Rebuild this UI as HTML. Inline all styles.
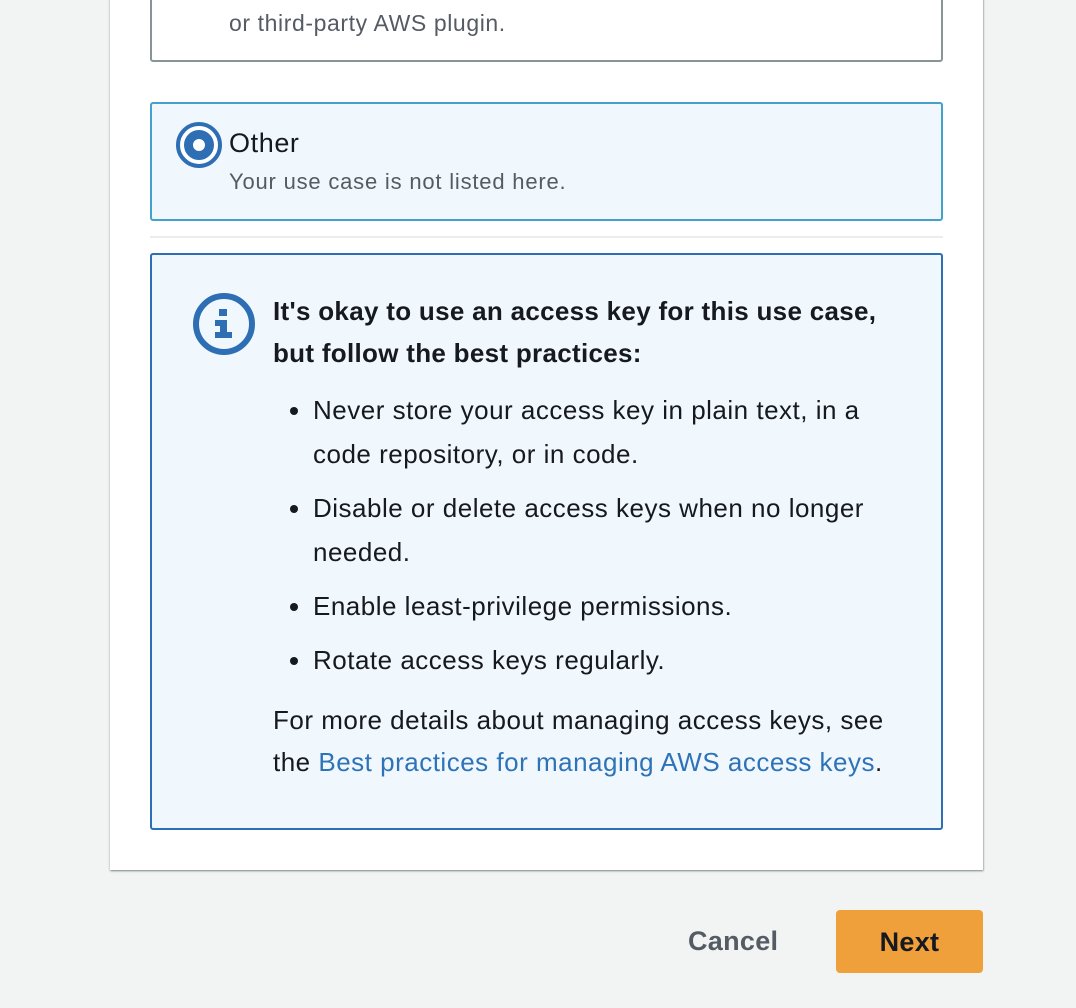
<!DOCTYPE html>
<html><head><meta charset="utf-8"><style>
*{box-sizing:border-box;margin:0;padding:0}
body{width:1076px;height:1008px;background:#f2f3f3;font-family:"Liberation Sans",sans-serif;position:relative;overflow:hidden;color:#16191f}
.panel{position:absolute;left:110px;top:-10px;width:873px;height:880px;background:#fff;box-shadow:0 1px 2px rgba(0,28,36,.4),1px 1px 1px rgba(0,28,36,.15)}
.box1{position:absolute;left:150px;top:-20px;width:793px;height:82px;border:2px solid #879596;border-radius:3px;background:#fff}
.box1 .t{position:absolute;left:77px;top:28px;font-size:23px;letter-spacing:.6px;color:#545b64}
.box2{position:absolute;left:150px;top:102px;width:793px;height:119px;border:2px solid #44a1cc;border-radius:3px;background:#f1f8fd}
.radio{position:absolute;left:24px;top:18px;width:46px;height:46px;border-radius:50%;border:4px solid #2e6eb4;background:#fff}
.radio:after{content:"";position:absolute;left:4px;top:4px;width:30px;height:30px;border-radius:50%;border:9px solid #2e6eb4;box-sizing:border-box}
.other{position:absolute;left:77px;top:24px;font-size:27px;letter-spacing:.6px}
.sub{position:absolute;left:77px;top:65px;font-size:22px;letter-spacing:.8px;color:#545b64}
.div{position:absolute;left:150px;top:236px;width:793px;height:2px;background:#eaeded}
.info{position:absolute;left:150px;top:253px;width:793px;height:577px;border:2px solid #2e6eb4;border-radius:3px;background:#f1f8fd}
.icon{position:absolute;left:39px;top:37px}
.txt{position:absolute;left:121px;top:35px;width:660px;font-size:26px;letter-spacing:.5px;line-height:42px}
.txt b{display:block;letter-spacing:.3px}
ul{margin-top:14px;padding-left:40px}
li{line-height:44px;margin-bottom:10px}
.txt p{margin-top:17px}
a{color:#2e73b8;text-decoration:none}
.cancel{position:absolute;left:688px;top:926px;font-size:27px;font-weight:bold;letter-spacing:.3px;color:#545b64}
.next{position:absolute;left:836px;top:910px;width:147px;height:63px;background:#f0a03a;border-radius:4px;font-size:27px;font-weight:bold;letter-spacing:.3px;text-align:center;line-height:65px;color:#16191f}
</style></head><body>
<div class="panel"></div>
<div class="box1"><div class="t">or third-party AWS plugin.</div></div>
<div class="box2"><div class="radio"></div><div class="other">Other</div><div class="sub">Your use case is not listed here.</div></div>
<div class="div"></div>
<div class="info">
<svg class="icon" width="66" height="66" viewBox="0 0 66 66"><circle cx="33" cy="32" r="28" fill="none" stroke="#2e6eb4" stroke-width="6"/><rect x="28" y="17" width="8" height="7" fill="#2e6eb4"/><path d="M24 28h12v12h5v6H24v-6h5v-6h-5z" fill="#2e6eb4"/></svg>
<div class="txt"><b>It's okay to use an access key for this use case,<br>but follow the best practices:</b>
<ul><li>Never store your access key in plain text, in a<br>code repository, or in code.</li><li>Disable or delete access keys when no longer<br>needed.</li><li>Enable least-privilege permissions.</li><li>Rotate access keys regularly.</li></ul>
<p>For more details about managing access keys, see<br>the <a>Best practices for managing AWS access keys</a>.</p></div>
</div>
<div class="cancel">Cancel</div>
<div class="next">Next</div>
</body></html>
